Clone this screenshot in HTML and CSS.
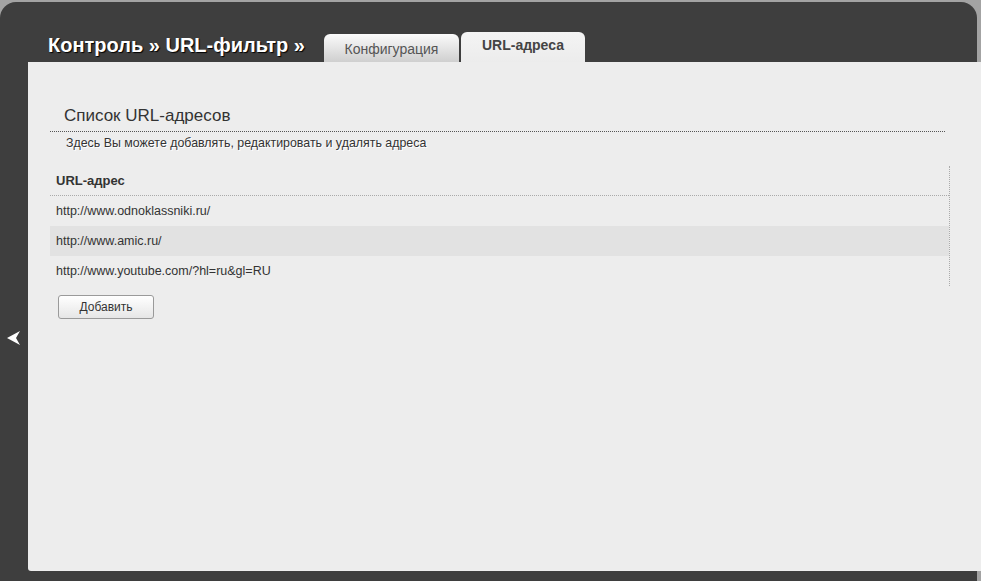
FILE: index.html
```html
<!DOCTYPE html>
<html lang="ru">
<head>
    <meta charset="UTF-8">
    <title>URL-фильтр</title>
    <link rel="stylesheet" href="styles.css">
</head>
<body>
    <div class="frame">
        <div class="top">
            <h1 class="title">Контроль » URL-фильтр »</h1>
            <div class="tabs">
                <div class="tab">Конфигурация</div>
                <div class="tab active">URL-адреса</div>
            </div>
        </div>
        <div class="main">
            <div class="side">
                <svg width="13" height="14" viewBox="0 0 13 14"><path d="M13 0 L0 7 L13 14 L9 7 Z" fill="#fff"/></svg>
            </div>
            <div class="panel">
                <h2 class="section-title">Список URL-адресов</h2>
                <p class="section-desc">Здесь Вы можете добавлять, редактировать и удалять адреса</p>

                <div class="grid">
                    <div class="grid-head">URL-адрес</div>
                    <div class="grid-row">http://www.odnoklassniki.ru/</div>
                    <div class="grid-row odd">http://www.amic.ru/</div>
                    <div class="grid-row">http://www.youtube.com/?hl=ru&amp;gl=RU</div>
                </div>

                <button class="btn">Добавить</button>
            </div>
        </div>
    </div>
</body>
</html>
```

FILE: styles.css
```css
html, body {
    margin: 0;
    padding: 0;
    height: 100%;
    overflow: hidden;
}
body {
    background: #a3a3a3;
    font-family: "Liberation Sans", Arial, sans-serif;
    color: #333;
}
.frame {
    margin-top: 2px;
    height: 579px;
    display: flex;
    flex-direction: column;
}
.top {
    height: 60px;
    margin-right: 4px;
    background: #3e3e3e;
    border-radius: 16px 16px 0 0;
    display: flex;
    align-items: flex-end;
    padding-left: 48px;
}
.title {
    margin: 0 19px 5px 0;
    font-size: 20px;
    font-weight: bold;
    color: #fff;
    text-shadow: 1px 1px 1px #000;
    line-height: 24px;
}
.tabs {
    display: flex;
    align-items: flex-end;
    gap: 2px;
}
.tab {
    width: 135px;
    height: 28px;
    line-height: 30px;
    text-align: center;
    font-size: 14px;
    color: #555;
    border-radius: 6px 6px 0 0;
    background: linear-gradient(#fbfbfb, #cfcfcf);
}
.tab.active {
    width: 124px;
    height: 30px;
    line-height: 27px;
    font-size: 14px;
    font-weight: bold;
    color: #444;
    background: linear-gradient(#f4f4f4, #ececec);
}
.main {
    flex: 1;
    display: flex;
    background: #3e3e3e;
    margin-right: 4px;
}
.side {
    width: 28px;
    flex-shrink: 0;
    padding-top: 269px;
    padding-left: 7px;
    box-sizing: border-box;
}
.panel {
    flex: 1;
    margin: 0 -4px 10px 0;
    background: #ededed;
    border-radius: 0 0 0 3px;
    padding: 44px 31px 0 22px;
}
.section-title {
    margin: 0 5px 0 0;
    padding: 0 0 5px 14px;
    font-size: 17px;
    font-weight: normal;
    line-height: 20px;
    color: #333;
    border-bottom: 1px dotted #555;
}
.section-desc {
    margin: 3px 0 0;
    padding-left: 16px;
    font-size: 12.4px;
    line-height: 16px;
    color: #333;
    text-shadow: 1px 1px 0 #fff;
}
.grid {
    margin-top: 15px;
    border-right: 1px dotted #aaa;
}
.grid-head {
    height: 29px;
    line-height: 29px;
    padding-left: 6px;
    font-size: 13px;
    font-weight: bold;
    color: #333;
    border-bottom: 1px dotted #aaa;
}
.grid-row {
    height: 30px;
    line-height: 30px;
    padding-left: 6px;
    font-size: 12.5px;
    color: #333;
}
.grid-row.odd {
    background: #e2e2e2;
}
.btn {
    margin: 9px 0 0 8px;
    width: 96px;
    height: 24px;
    font-family: "Liberation Sans", Arial, sans-serif;
    font-size: 12px;
    color: #333;
    border: 1px solid #9a9a9a;
    border-radius: 3px;
    background: linear-gradient(#ffffff, #e6e6e6);
    cursor: pointer;
}
```
